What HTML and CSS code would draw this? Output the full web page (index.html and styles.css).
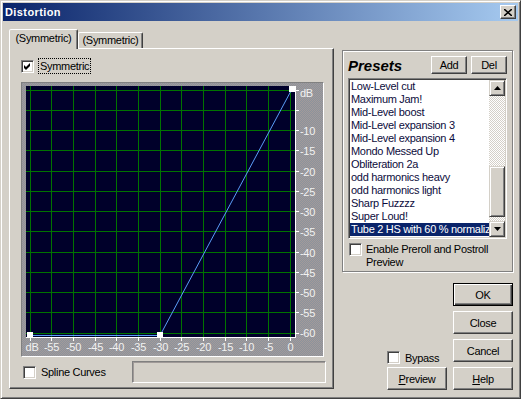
FILE: index.html
```html
<!DOCTYPE html>
<html lang="en">
<head>
  <meta charset="UTF-8">
  <title>Distortion</title>
  <link rel="stylesheet" href="styles.css">
</head>
<body>
  <div class="window">
    <!-- Title Bar -->
    <div class="titlebar">
      <span class="title">Distortion</span>
      <div class="title-close">
        <svg width="8" height="7" viewBox="0 0 8 7"><path d="M0 0L8 7M8 0L0 7" stroke="#000" stroke-width="1.6"/></svg>
      </div>
    </div>

    <div class="content">
      <!-- Tab control with the curve graph -->
      <div class="tabbox">
        <div class="tabs">
          <div class="tab active">(Symmetric)</div>
          <div class="tab">(Symmetric)</div>
        </div>
        <div class="tab-panel">
          <div class="check-row">
            <span class="checkbox">
              <svg width="9" height="9" viewBox="0 0 9 9"><polygon points="1,3 3,5 7,1 7,4 3,8 1,6" fill="#000"/></svg>
            </span>
            <span class="focus">Symmetric</span>
          </div>

          <div class="graph-frame">
            <svg class="graph" width="299" height="271" viewBox="0 0 299 271">
              <rect x="3" y="2" width="269" height="251" fill="#00002a"/>
              <path stroke="#007400" fill="none" d="M7.5 2V253M28.5 2V253M50.5 2V253M72.5 2V253M93.5 2V253M115.5 2V253M137.5 2V253M158.5 2V253M180.5 2V253M202.5 2V253M223.5 2V253M245.5 2V253M267.5 2V253"/>
              <path stroke="#007400" fill="none" d="M3 6.5H272M3 26.5H272M3 46.5H272M3 66.5H272M3 87.5H272M3 107.5H272M3 127.5H272M3 147.5H272M3 168.5H272M3 188.5H272M3 208.5H272M3 228.5H272M3 249.5H272"/>
              <path stroke="#fff" fill="none" d="M272.5 2V254M3 253.5H273"/>
              <path stroke="#fff" fill="none" d="M273 6.5h3M273 26.5h3M273 46.5h3M273 66.5h3M273 87.5h3M273 107.5h3M273 127.5h3M273 147.5h3M273 168.5h3M273 188.5h3M273 208.5h3M273 228.5h3M273 249.5h3"/>
              <path stroke="#fff" fill="none" d="M7.5 254v3M28.5 254v3M50.5 254v3M72.5 254v3M93.5 254v3M115.5 254v3M137.5 254v3M158.5 254v3M180.5 254v3M202.5 254v3M223.5 254v3M245.5 254v3M267.5 254v3"/>
              <path stroke="#5a9cf8" fill="none" d="M7 251.5H137L269 5"/>
              <rect x="4" y="248" width="6" height="6" fill="#fff"/>
              <rect x="134" y="248" width="6" height="6" fill="#fff"/>
              <rect x="266" y="2" width="6" height="6" fill="#fff"/>
              <g class="axis-y">
                <text x="277" y="13">dB</text>
                <text x="277" y="50.5">-10</text>
                <text x="277" y="70.5">-15</text>
                <text x="277" y="91.5">-20</text>
                <text x="277" y="111.5">-25</text>
                <text x="277" y="131.5">-30</text>
                <text x="277" y="151.5">-35</text>
                <text x="277" y="172.5">-40</text>
                <text x="277" y="192.5">-45</text>
                <text x="277" y="212.5">-50</text>
                <text x="277" y="232.5">-55</text>
                <text x="277" y="253">-60</text>
              </g>
              <g class="axis-x">
                <text x="9" y="267">dB</text>
                <text x="28.5" y="267">-55</text>
                <text x="50.5" y="267">-50</text>
                <text x="72.5" y="267">-45</text>
                <text x="93.5" y="267">-40</text>
                <text x="115.5" y="267">-35</text>
                <text x="137.5" y="267">-30</text>
                <text x="158.5" y="267">-25</text>
                <text x="180.5" y="267">-20</text>
                <text x="202.5" y="267">-15</text>
                <text x="223.5" y="267">-10</text>
                <text x="245.5" y="267">-5</text>
                <text x="267.5" y="267">0</text>
              </g>
            </svg>
          </div>

          <div class="spline-row">
            <span class="checkbox"></span>
            <span class="spline-label">Spline Curves</span>
            <div class="spline-box"></div>
          </div>
        </div>
      </div>

      <!-- Presets and dialog buttons -->
      <div class="side">
        <div class="presets">
          <div class="presets-head">
            <span class="presets-title">Presets</span>
            <button class="btn small">Add</button>
            <button class="btn small">Del</button>
          </div>
          <div class="listbox">
            <ul class="list">
              <li>Low-Level cut</li>
              <li>Maximum Jam!</li>
              <li>Mid-Level boost</li>
              <li>Mid-Level expansion 3</li>
              <li>Mid-Level expansion 4</li>
              <li>Mondo Messed Up</li>
              <li>Obliteration 2a</li>
              <li>odd harmonics heavy</li>
              <li>odd harmonics light</li>
              <li>Sharp Fuzzzz</li>
              <li>Super Loud!</li>
              <li class="selected">Tube 2 HS with 60 % normaliz</li>
            </ul>
            <div class="scrollbar">
              <div class="scroll-btn">
                <svg width="7" height="4" viewBox="0 0 7 4"><polygon points="3.5,0 7,4 0,4" fill="#000"/></svg>
              </div>
              <div class="scroll-track">
                <div class="scroll-thumb"></div>
              </div>
              <div class="scroll-btn">
                <svg width="7" height="4" viewBox="0 0 7 4"><polygon points="0,0 7,0 3.5,4" fill="#000"/></svg>
              </div>
            </div>
          </div>
          <div class="preroll">
            <span class="checkbox"></span>
            <span>Enable Preroll and Postroll<br>Preview</span>
          </div>
        </div>

        <div class="actions">
          <div class="actions-left">
            <div class="bypass">
              <span class="checkbox"></span>
              <span>Bypass</span>
            </div>
            <button class="btn"><u>P</u>review</button>
          </div>
          <div class="actions-right">
            <button class="btn default">OK</button>
            <button class="btn">Close</button>
            <button class="btn">Cancel</button>
            <button class="btn"><u>H</u>elp</button>
          </div>
        </div>
      </div>
    </div>
  </div>
</body>
</html>
```

FILE: styles.css
```css
/* General Reset */
* {
  margin: 0;
  padding: 0;
  box-sizing: border-box;
}

body {
  width: 521px;
  height: 399px;
  overflow: hidden;
  background-color: #d4d0c8;
  font-family: "Liberation Sans", Arial, sans-serif;
  font-size: 11px;
  letter-spacing: -0.3px;
  color: #000;
}

/* Window frame */
.window {
  width: 521px;
  height: 399px;
  border: 1px solid;
  border-color: #d4d0c8 #404040 #404040 #d4d0c8;
  box-shadow: inset 1px 1px #fff, inset -1px -1px #808080;
  padding: 2px;
}

.titlebar {
  height: 18px;
  display: flex;
  align-items: center;
  justify-content: space-between;
  padding: 0 2px;
  background: linear-gradient(to right, #0a246a, #a6caf0);
}

.title {
  color: #fff;
  font-weight: bold;
  letter-spacing: 0.4px;
}

.title-close {
  width: 16px;
  height: 14px;
  background-color: #d4d0c8;
  border: 1px solid;
  border-color: #fff #404040 #404040 #fff;
  box-shadow: inset -1px -1px #808080;
  display: flex;
  align-items: center;
  justify-content: center;
}

.title-close svg {
  display: block;
}

/* Main content */
.content {
  display: flex;
  gap: 8px;
  padding: 8px 0 0 6px;
}

/* Tabs */
.tabbox {
  width: 325px;
}

.tabs {
  display: flex;
  align-items: flex-end;
  height: 19px;
}

.tab {
  width: 65px;
  height: 16px;
  border: 1px solid;
  border-bottom: none;
  border-color: #fff #404040 transparent #fff;
  box-shadow: inset -1px 0 #808080;
  border-radius: 2px 2px 0 0;
  text-align: center;
  line-height: 15px;
  white-space: nowrap;
}

.tab.active {
  width: 69px;
  height: 20px;
  margin-bottom: -1px;
  position: relative;
  z-index: 1;
  background-color: #d4d0c8;
  line-height: 17px;
}

.tab-panel {
  height: 341px;
  border: 1px solid;
  border-color: #fff #404040 #404040 #fff;
  box-shadow: inset -1px -1px #808080;
  padding: 9px 0 0 11px;
}

/* Checkboxes */
.checkbox {
  flex: none;
  width: 13px;
  height: 13px;
  background-color: #fff;
  border: 1px solid;
  border-color: #808080 #fff #fff #808080;
  box-shadow: inset 1px 1px #404040, inset -1px -1px #d4d0c8;
  display: flex;
  align-items: center;
  justify-content: center;
}

.checkbox svg {
  display: block;
}

.check-row {
  display: flex;
  align-items: center;
  gap: 4px;
  height: 16px;
}

.focus {
  height: 16px;
  line-height: 14px;
  padding: 0 1px;
  border: 1px dotted #000;
}

/* Graph */
.graph-frame {
  width: 303px;
  height: 275px;
  margin-top: 8px;
  padding: 1px;
  border: 1px solid;
  border-color: #808080 #fff #fff #808080;
  background: repeating-conic-gradient(#a39a9a 0 25%, #8b939c 0 50%) 0 0 / 2px 2px;
}

.graph {
  display: block;
}

.graph text {
  font-family: "Liberation Sans", Arial, sans-serif;
  font-size: 11px;
  fill: #f2f2f2;
}

.axis-x text {
  text-anchor: middle;
}

.spline-row {
  display: flex;
  align-items: center;
  height: 22px;
  margin-top: 4px;
}

.spline-row .checkbox {
  margin-left: 2px;
}

.spline-label {
  margin-left: 5px;
}

.spline-box {
  width: 194px;
  height: 22px;
  margin-left: auto;
  margin-right: 7px;
  border: 1px solid;
  border-color: #808080 #fff #fff #808080;
  box-shadow: inset 1px 1px #a09a98;
}

/* Presets group */
.side {
  width: 171px;
  padding-top: 21px;
}

.presets {
  height: 222px;
  border: 1px solid #808080;
  box-shadow: inset 1px 1px #fff, 1px 1px #fff;
  padding: 5px 5px 0 5px;
}

.presets-head {
  display: flex;
  align-items: center;
  gap: 4px;
  height: 18px;
}

.presets-title {
  margin-right: auto;
  font-size: 15px;
  font-weight: bold;
  font-style: italic;
  letter-spacing: 0;
}

.btn {
  font-family: inherit;
  font-size: 11px;
  letter-spacing: -0.3px;
  color: #000;
  background-color: #d4d0c8;
  border: 1px solid;
  border-color: #fff #404040 #404040 #fff;
  box-shadow: inset -1px -1px #808080;
  display: flex;
  align-items: center;
  justify-content: center;
  width: 60px;
  height: 23px;
}

.btn.small {
  width: 36px;
  height: 18px;
}

.btn.default {
  border-color: #000;
  box-shadow: inset 1px 1px #fff, inset -1px -1px #404040, inset -2px -2px #808080;
}

.listbox {
  display: flex;
  height: 161px;
  margin-top: 4px;
  background-color: #fff;
  border: 1px solid;
  border-color: #808080 #fff #fff #808080;
  box-shadow: inset 1px 1px #404040, inset -1px -1px #d4d0c8;
  padding: 1px;
}

.list {
  flex: 1;
  list-style: none;
  overflow: hidden;
  min-width: 0;
}

.list li {
  height: 13px;
  line-height: 13px;
  padding-left: 1px;
  white-space: nowrap;
  overflow: hidden;
  color: #0c0c3c;
}

.list li.selected {
  background-color: #0a246a;
  color: #fff;
}

.scrollbar {
  width: 16px;
  display: flex;
  flex-direction: column;
}

.scroll-btn {
  height: 16px;
  background-color: #d4d0c8;
  border: 1px solid;
  border-color: #d4d0c8 #404040 #404040 #d4d0c8;
  box-shadow: inset 1px 1px #fff, inset -1px -1px #808080;
  display: flex;
  align-items: center;
  justify-content: center;
}

.scroll-track {
  flex: 1;
  background: repeating-conic-gradient(#d4d0c8 0 25%, #fff 0 50%) 0 0 / 2px 2px;
}

.scroll-thumb {
  height: 51px;
  margin-top: 70px;
  background-color: #d4d0c8;
  border: 1px solid;
  border-color: #d4d0c8 #404040 #404040 #d4d0c8;
  box-shadow: inset 1px 1px #fff, inset -1px -1px #808080;
}

.preroll {
  display: flex;
  align-items: flex-start;
  gap: 4px;
  margin-top: 4px;
  margin-left: 1px;
  line-height: 13px;
}

/* Dialog buttons */
.actions {
  display: flex;
  justify-content: flex-end;
  align-items: flex-end;
  gap: 6px;
  margin-top: 11px;
}

.actions-left {
  display: flex;
  flex-direction: column;
  gap: 3px;
}

.actions-right {
  display: flex;
  flex-direction: column;
  gap: 5px;
}

.bypass {
  display: flex;
  align-items: center;
  gap: 5px;
  height: 13px;
}
```
